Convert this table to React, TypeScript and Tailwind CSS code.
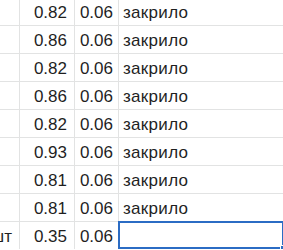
const rows: { a: string; b: string; c: string; d: string }[] = [
  { a: '', b: '0.82', c: '0.06', d: 'закрило' },
  { a: '', b: '0.86', c: '0.06', d: 'закрило' },
  { a: '', b: '0.82', c: '0.06', d: 'закрило' },
  { a: '', b: '0.86', c: '0.06', d: 'закрило' },
  { a: '', b: '0.82', c: '0.06', d: 'закрило' },
  { a: '', b: '0.93', c: '0.06', d: 'закрило' },
  { a: '', b: '0.81', c: '0.06', d: 'закрило' },
  { a: '', b: '0.81', c: '0.06', d: 'закрило' },
  { a: 'шт', b: '0.35', c: '0.06', d: '' },
];

export default function App() {
  return (
    <div className="w-[283px] h-[250px] overflow-hidden bg-white text-[17px] text-[#1f1f1f] font-['Liberation_Sans',Arial,sans-serif]">
      <div className="-mt-[3px]">
        {rows.map((r, i) => {
          const selected = i === rows.length - 1;
          return (
            <div key={i} className="flex h-[28px] border-t border-[#e2e3e3] leading-[20px]">
              {/* A */}
              <div className="w-[20px] shrink-0 border-r border-[#e2e3e3] flex justify-end overflow-hidden pr-[7px] pt-[5px] whitespace-nowrap">
                {r.a}
              </div>
              {/* B */}
              <div className="w-[55px] shrink-0 border-r border-[#e2e3e3] flex justify-end pr-[7px] pt-[5px]">
                {r.b}
              </div>
              {/* C */}
              <div className="w-[44px] shrink-0 border-r border-[#e2e3e3] flex justify-end pr-[5px] pt-[5px]">
                {r.c}
              </div>
              {/* D */}
              <div className="relative flex-1 pl-[4px] pt-[5px] whitespace-nowrap tracking-[0.3px]">
                {r.d}
                {selected && (
                  <div className="absolute -left-[1px] -top-[1px] -right-[1px] bottom-0 border-2 border-[#2b6cc4]">
                    <div className="absolute -right-[3px] -bottom-[3px] w-[5px] h-[5px] bg-[#2b6cc4] border border-white" />
                  </div>
                )}
              </div>
            </div>
          );
        })}
      </div>
    </div>
  );
}
